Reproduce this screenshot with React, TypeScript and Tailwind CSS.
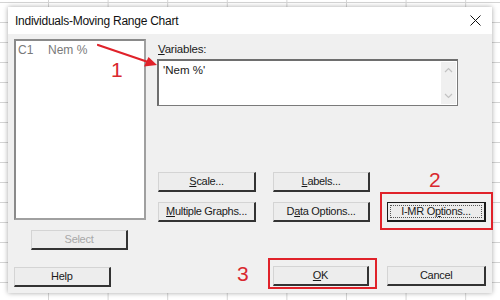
import React from 'react';

interface BtnProps {
  children: React.ReactNode;
  className?: string;
  disabled?: boolean;
  focused?: boolean;
}

function Btn({ children, className = '', disabled = false, focused = false }: BtnProps) {
  if (focused) {
    return (
      <div className={`h-[20px] p-[2px] bg-[#ececec] border border-[#1a1a1a] border-r-2 border-b-2 ${className}`}>
        <div className="h-full flex items-center justify-center border border-dotted border-[#555] text-[11px] tracking-[-0.3px] text-[#1a1a1a]">
          {children}
        </div>
      </div>
    );
  }
  return (
    <div
      className={`h-[20px] flex items-center justify-center bg-[#ededed] border-t border-l border-t-[#d4d4d4] border-l-[#d4d4d4] border-r-2 border-b-2 border-r-[#333] border-b-[#333] text-[11px] tracking-[-0.3px] ${
        disabled ? 'text-[#a8a8a8]' : 'text-[#1a1a1a]'
      } ${className}`}
    >
      {children}
    </div>
  );
}

export default function App() {
  return (
    <div className="relative w-[500px] h-[300px] overflow-hidden bg-white bg-[linear-gradient(to_right,#d4d4d4_1px,transparent_1px),linear-gradient(to_bottom,#d4d4d4_1px,transparent_1px)] [background-size:59.6px_20px] [background-position:48px_2px] pt-[7px] pl-[8px] font-['Liberation_Sans',Arial,sans-serif]">
      <div className="w-[484px] h-[286px] flex flex-col bg-[#f0f0f0] shadow-[0_0_5px_rgba(0,0,0,0.35)]">
        {/* title bar */}
        <div className="h-[27px] bg-white flex items-center justify-between pl-[7px] pr-[9px]">
          <span className="text-[12px] tracking-[-0.25px] text-[#111]">Individuals-Moving Range Chart</span>
          <svg width="11" height="11" viewBox="0 0 11 11" className="mr-[2px]">
            <path d="M0.5 0.5 L10.5 10.5 M10.5 0.5 L0.5 10.5" stroke="#111" strokeWidth="1" />
          </svg>
        </div>

        <div className="flex-1 flex flex-col px-[6px] pt-[5px]">
          <div className="flex">
            {/* left column */}
            <div className="w-[132px] flex flex-col">
              <div className="h-[181px] bg-white border-2 border-[#8a8a8a] border-r-[#a0a0a0] border-b-[#a0a0a0] px-[2px] pt-[1px]">
                <div className="flex text-[12px] text-[#7a7a7a] leading-[16px]">
                  <span className="w-[30px]">C1</span>
                  <span>Nem %</span>
                </div>
              </div>
              <Btn disabled className="mt-[10px] ml-[17px] w-[97px]">Select</Btn>
            </div>

            {/* right column */}
            <div className="ml-[11px] flex flex-col">
              <div className="text-[11.5px] tracking-[-0.2px] text-[#1a1a1a] leading-[15px] mt-[3px] ml-[1px]">
                <span className="underline">V</span>ariables:
              </div>
              <div className="mt-[2px] w-[301px] h-[47px] bg-white flex border-2 border-[#6e6e6e] border-r border-b border-r-[#7a7a7a] border-b-[#7a7a7a]">
                <div className="flex-1 text-[11.5px] text-[#1a1a1a] px-[4px] pt-[2px] leading-[15px]">'Nem %'</div>
                <div className="w-[15px] my-[1px] mr-[1px] bg-[#f0f0f0] flex flex-col items-center justify-between py-[5px]">
                  <svg width="9" height="6" viewBox="0 0 9 6">
                    <path d="M1 5 L4.5 1.5 L8 5" stroke="#c2c2c2" strokeWidth="1.2" fill="none" />
                  </svg>
                  <svg width="9" height="6" viewBox="0 0 9 6">
                    <path d="M1 1 L4.5 4.5 L8 1" stroke="#c2c2c2" strokeWidth="1.2" fill="none" />
                  </svg>
                </div>
              </div>

              <div className="mt-[66px] grid grid-cols-[98px_97px_99px] gap-x-[17px] gap-y-[10px] ml-[1px]">
                <Btn><span><span className="underline">S</span>cale...</span></Btn>
                <Btn><span><span className="underline">L</span>abels...</span></Btn>
                <div />
                <Btn><span><span className="underline">M</span>ultiple Graphs...</span></Btn>
                <Btn><span>D<span className="underline">a</span>ta Options...</span></Btn>
                <Btn focused><span>I-MR O<span className="underline">p</span>tions...</span></Btn>
              </div>
            </div>
          </div>

          {/* bottom row */}
          <div className="mt-[16px] flex items-start">
            <Btn className="w-[97px] mt-[1px]">Help</Btn>
            <Btn className="w-[97px] ml-[162px]"><span><span className="underline">O</span>K</span></Btn>
            <Btn className="w-[99px] ml-[18px]">Cancel</Btn>
          </div>
        </div>
      </div>

      {/* annotations */}
      <svg className="absolute left-0 top-0" width="500" height="300" viewBox="0 0 500 300">
        <path d="M98 45 L148 62" stroke="#e0222a" strokeWidth="2.2" strokeLinecap="round" />
        <path d="M157 65 L144 66.5 L148.5 57 Z" fill="#e0222a" />
      </svg>
      <div className="absolute left-[380px] top-[192px] w-[113px] h-[38px] border-[2.5px] border-[#e0222a]" />
      <div className="absolute left-[268px] top-[258px] w-[109px] h-[31px] border-[2.5px] border-[#e0222a]" />
      <span className="absolute left-[111px] top-[59px] text-[21px] leading-[22px] text-[#d9282e]">1</span>
      <span className="absolute left-[429px] top-[169px] text-[21px] leading-[22px] text-[#d9282e]">2</span>
      <span className="absolute left-[237px] top-[263px] text-[21px] leading-[22px] text-[#d9282e]">3</span>
    </div>
  );
}
